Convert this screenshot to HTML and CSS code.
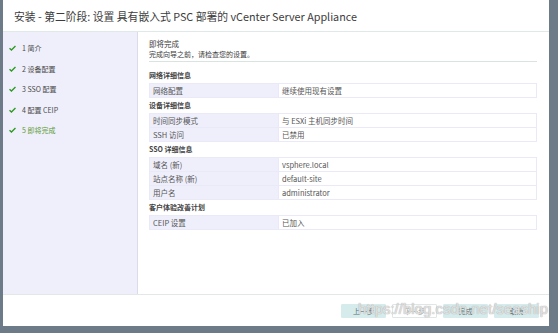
FILE: index.html
```html
<!DOCTYPE html>
<html lang="zh">
<head>
<meta charset="UTF-8">
<title>安装 - 第二阶段</title>
<link rel="stylesheet" href="styles.css">
</head>
<body>
<div class="window">
  <div class="title-bar">安装 - 第二阶段: 设置 具有嵌入式 PSC 部署的 vCenter Server Appliance</div>
  <div class="main">
    <ul class="steps">
      <li class="step"><svg class="check" viewBox="0 0 8 6"><path d="M0.6 3.2 L2.8 5.2 L7.4 0.8" /></svg>1 简介</li>
      <li class="step"><svg class="check" viewBox="0 0 8 6"><path d="M0.6 3.2 L2.8 5.2 L7.4 0.8" /></svg>2 设备配置</li>
      <li class="step"><svg class="check" viewBox="0 0 8 6"><path d="M0.6 3.2 L2.8 5.2 L7.4 0.8" /></svg>3 SSO 配置</li>
      <li class="step"><svg class="check" viewBox="0 0 8 6"><path d="M0.6 3.2 L2.8 5.2 L7.4 0.8" /></svg>4 配置 CEIP</li>
      <li class="step active"><svg class="check" viewBox="0 0 8 6"><path d="M0.6 3.2 L2.8 5.2 L7.4 0.8" /></svg>5 即将完成</li>
    </ul>
    <div class="content">
      <div class="page-head">
        <div class="page-title">即将完成</div>
        <div class="page-sub">完成向导之前，请检查您的设置。</div>
      </div>

      <div class="section first">
        <div class="section-title">网络详细信息</div>
        <table class="details">
          <tr><td class="label">网络配置</td><td>继续使用现有设置</td></tr>
        </table>
      </div>

      <div class="section">
        <div class="section-title">设备详细信息</div>
        <table class="details">
          <tr><td class="label">时间同步模式</td><td>与 ESXi 主机同步时间</td></tr>
          <tr><td class="label">SSH 访问</td><td>已禁用</td></tr>
        </table>
      </div>

      <div class="section">
        <div class="section-title">SSO 详细信息</div>
        <table class="details">
          <tr><td class="label">域名 (新)</td><td>vsphere.local</td></tr>
          <tr><td class="label">站点名称 (新)</td><td>default-site</td></tr>
          <tr><td class="label">用户名</td><td>administrator</td></tr>
        </table>
      </div>

      <div class="section">
        <div class="section-title">客户体验改善计划</div>
        <table class="details">
          <tr><td class="label">CEIP 设置</td><td>已加入</td></tr>
        </table>
      </div>
    </div>
  </div>
  <div class="footer">
    <button class="btn">上一步</button>
    <button class="btn disabled">下一步</button>
    <button class="btn">完成</button>
    <button class="btn">取消</button>
  </div>
  <div class="watermark">https://blog.csdn.net/seaship</div>
</div>
</body>
</html>
```

FILE: styles.css
```css
body {
  margin: 0;
  background-color: #6d7a87;
  font-family: "Noto Sans CJK SC", "Noto Sans", sans-serif;
  color: #444;
}

.window {
  position: relative;
  width: 546px;
  height: 326px;
  margin-left: 3px;
  background-color: #fff;
  display: flex;
  flex-direction: column;
}

.title-bar {
  height: 31px;
  line-height: 33px;
  padding-left: 11px;
  font-size: 10.8px;
  color: #3c3c3c;
  border-bottom: 1px solid #dfe9e8;
}

.main {
  flex: 1;
  display: flex;
  min-height: 0;
}

.steps {
  list-style: none;
  margin: 0;
  padding: 6px 0 0 0;
  width: 134px;
  background-color: #efeffb;
  border-right: 1px solid #dcdce8;
}

.step {
  height: 20.5px;
  line-height: 20.5px;
  font-size: 7px;
  color: #4a4a4a;
  display: flex;
  align-items: center;
}

.step.active {
  color: #5b9a34;
}

.check {
  width: 7px;
  height: 6px;
  margin: 0 6px 0 6px;
  fill: none;
  stroke: #2e9a22;
  stroke-width: 1.6;
}

.content {
  flex: 1;
  padding: 0 12px 0 11px;
}

.page-head {
  padding-top: 7px;
  padding-bottom: 2px;
  border-bottom: 1px solid #d9e4e1;
}

.page-title {
  font-size: 7.5px;
  line-height: 10px;
  color: #3a3a3a;
}

.page-sub {
  font-size: 7px;
  line-height: 10px;
  color: #3a3a3a;
}

.section.first {
  margin-top: 6px;
}

.section-title {
  height: 15px;
  line-height: 15px;
  font-size: 7px;
  font-weight: bold;
  color: #444;
}

.details {
  width: 100%;
  border-collapse: collapse;
  font-size: 7.5px;
  color: #555;
}

.details td {
  height: 13px;
  padding: 0 3px;
  border: 1px solid #e9e9f7;
  line-height: 13px;
}

.details td.label {
  width: 122px;
  background-color: #efeffb;
}

.footer {
  height: 32px;
  border-top: 1px solid #e1e8e7;
  display: flex;
  justify-content: flex-end;
  align-items: flex-start;
  gap: 6px;
  padding: 9px 10px 0 0;
  box-sizing: border-box;
}

.btn {
  width: 45px;
  height: 14px;
  padding: 0;
  font-family: inherit;
  font-size: 7px;
  color: #5d6d6d;
  background-color: #d6ecec;
  border: 1px solid #d6ecec;
  border-radius: 1px;
}

.btn.disabled {
  background-color: #fff;
  border-color: #dfe6e6;
  color: #9aa5a5;
}

.watermark {
  position: absolute;
  right: 1px;
  bottom: 9px;
  font-family: "Liberation Sans", sans-serif;
  font-size: 15px;
  color: rgba(255, 255, 255, 0.6);
  text-shadow: 0 0 1px #b0b0b0, 0 0 1px #b0b0b0;
  pointer-events: none;
}
```
